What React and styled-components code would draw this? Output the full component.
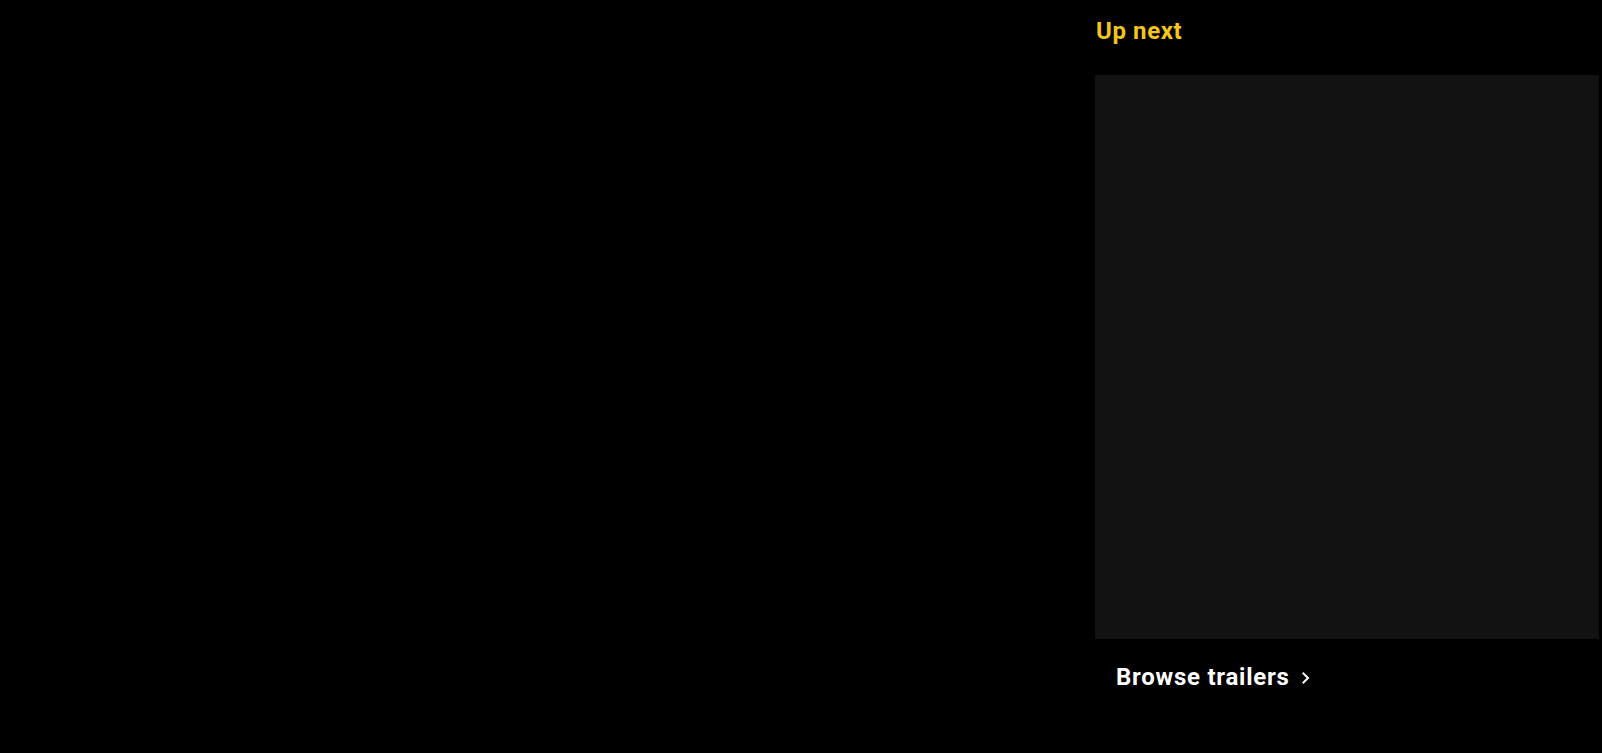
import React from 'react'
import styled, { createGlobalStyle } from "styled-components"

const GlobalStyle = createGlobalStyle`
    html, body {
        margin:0;
        padding:0;
        background:#000;
    }
    body {
        font-family:Roboto, 'Liberation Sans', sans-serif;
    }
`;

const Chevron = () => (
    <svg width="24" height="24" viewBox="0 0 24 24" fill="currentColor">
        <path d="M9.4 18L8 16.6l4.6-4.6L8 7.4 9.4 6l6 6z" />
    </svg>
)

const App = () => {
    return (
        <>
            <GlobalStyle />
            <Page>
                <Player />
                <Side>
                    <Heading>Up next</Heading>
                    <Queue />
                    <BrowseLink href="#">
                        Browse trailers
                        <Chevron />
                    </BrowseLink>
                </Side>
            </Page>
        </>
    )
}

const Page = styled.div`
    display:grid;
    grid-template-columns:1fr 504px;
    width:100vw;
    height:100vh;
    padding-right:3px;
    box-sizing:border-box;
    background:#000;
    overflow:hidden;
`;

const Player = styled.div`
    background:#000;
`;

const Side = styled.div`
    display:flex;
    flex-direction:column;
    padding-top:17px;
`;

const Heading = styled.h3`
    margin:0 0 29px 1px;
    font-family:Roboto, 'Liberation Sans', sans-serif;
    font-size:24px;
    line-height:1.2;
    letter-spacing:0.6px;
    font-weight:700;
    color:#f5c518;
`;

const Queue = styled.div`
    height:564px;
    background:#121212;
`;

const BrowseLink = styled.a`
    display:flex;
    align-items:center;
    gap:4px;
    margin-top:24px;
    padding-left:21px;
    font-family:Roboto, 'Liberation Sans', sans-serif;
    font-size:24px;
    line-height:1.2;
    letter-spacing:0.75px;
    font-weight:700;
    color:#fff;
    text-decoration:none;

    svg {
        margin-top:2px;
    }
`;

export default App
